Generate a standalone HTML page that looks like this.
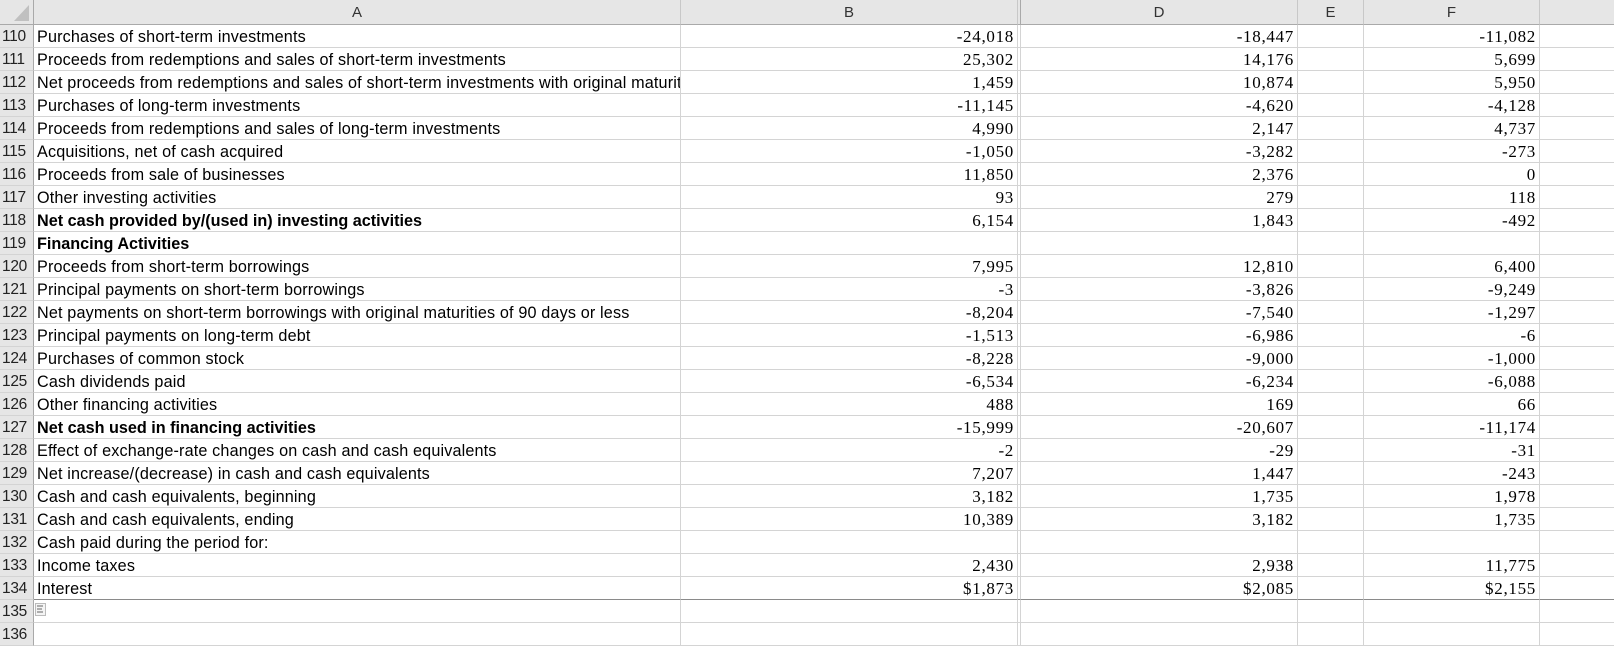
<!DOCTYPE html>
<html><head><meta charset="utf-8">
<style>
*{margin:0;padding:0;box-sizing:border-box}
body{width:1614px;height:636px;overflow:hidden;background:#fff;position:relative;font-family:"Liberation Sans",sans-serif}
.r{position:absolute;left:0;width:1614px;height:23px}
.r div{position:absolute;top:0;height:23px;border-right:1px solid #d4d4d4;border-bottom:1px solid #d4d4d4;line-height:24px;white-space:nowrap;overflow:hidden}
.h{left:0;width:34px;background:#e6e6e6;border-right:1px solid #a9a9a9 !important;color:#222;font-size:15.5px;padding-left:2px;letter-spacing:-0.3px}
.a{left:34px;width:647px;font-size:16.2px;color:#000;padding-left:3px;letter-spacing:0.15px}
.b{left:681px;width:337px}
.c{left:1018px;width:3px}
.d{left:1021px;width:277px}
.e{left:1298px;width:66px}
.f{left:1364px;width:176px}
.g{left:1540px;width:74px;border-right:none !important}
.n{font-family:"Liberation Serif",serif;font-size:17px;letter-spacing:0.7px;text-align:right;padding-right:3px;color:#000}
.bo{font-weight:bold;letter-spacing:0}
.hd{position:absolute;top:0;height:25px;background:#e6e6e6;border-right:1px solid #c8c8c8;border-bottom:1px solid #a9a9a9;text-align:center;line-height:26px;font-size:15px;color:#333}
</style></head><body>
<div class="hd" style="left:0;width:34px;border-right:1px solid #a9a9a9"><svg width="34" height="25" style="position:absolute;left:0;top:0"><polygon points="29,5 29,21 14,21" fill="#c0c0c0"/></svg></div>
<div class="hd" style="left:34px;width:647px">A</div>
<div class="hd" style="left:681px;width:337px">B</div>
<div class="hd" style="left:1018px;width:3px;border-right:1px solid #a9a9a9"></div>
<div class="hd" style="left:1021px;width:277px">D</div>
<div class="hd" style="left:1298px;width:66px">E</div>
<div class="hd" style="left:1364px;width:176px">F</div>
<div class="hd" style="left:1540px;width:74px;border-right:none"></div>

<div class="r" style="top:25px"><div class="h">110</div><div class="a">Purchases of short-term investments</div><div class="b n">-24,018</div><div class="c"></div><div class="d n">-18,447</div><div class="e"></div><div class="f n">-11,082</div><div class="g"></div></div>
<div class="r" style="top:48px"><div class="h">111</div><div class="a">Proceeds from redemptions and sales of short-term investments</div><div class="b n">25,302</div><div class="c"></div><div class="d n">14,176</div><div class="e"></div><div class="f n">5,699</div><div class="g"></div></div>
<div class="r" style="top:71px"><div class="h">112</div><div class="a">Net proceeds from redemptions and sales of short-term investments with original maturities of 90 days or less</div><div class="b n">1,459</div><div class="c"></div><div class="d n">10,874</div><div class="e"></div><div class="f n">5,950</div><div class="g"></div></div>
<div class="r" style="top:94px"><div class="h">113</div><div class="a">Purchases of long-term investments</div><div class="b n">-11,145</div><div class="c"></div><div class="d n">-4,620</div><div class="e"></div><div class="f n">-4,128</div><div class="g"></div></div>
<div class="r" style="top:117px"><div class="h">114</div><div class="a">Proceeds from redemptions and sales of long-term investments</div><div class="b n">4,990</div><div class="c"></div><div class="d n">2,147</div><div class="e"></div><div class="f n">4,737</div><div class="g"></div></div>
<div class="r" style="top:140px"><div class="h">115</div><div class="a">Acquisitions, net of cash acquired</div><div class="b n">-1,050</div><div class="c"></div><div class="d n">-3,282</div><div class="e"></div><div class="f n">-273</div><div class="g"></div></div>
<div class="r" style="top:163px"><div class="h">116</div><div class="a">Proceeds from sale of businesses</div><div class="b n">11,850</div><div class="c"></div><div class="d n">2,376</div><div class="e"></div><div class="f n">0</div><div class="g"></div></div>
<div class="r" style="top:186px"><div class="h">117</div><div class="a">Other investing activities</div><div class="b n">93</div><div class="c"></div><div class="d n">279</div><div class="e"></div><div class="f n">118</div><div class="g"></div></div>
<div class="r" style="top:209px"><div class="h">118</div><div class="a bo">Net cash provided by/(used in) investing activities</div><div class="b n">6,154</div><div class="c"></div><div class="d n">1,843</div><div class="e"></div><div class="f n">-492</div><div class="g"></div></div>
<div class="r" style="top:232px"><div class="h">119</div><div class="a bo">Financing Activities</div><div class="b n"></div><div class="c"></div><div class="d n"></div><div class="e"></div><div class="f n"></div><div class="g"></div></div>
<div class="r" style="top:255px"><div class="h">120</div><div class="a">Proceeds from short-term borrowings</div><div class="b n">7,995</div><div class="c"></div><div class="d n">12,810</div><div class="e"></div><div class="f n">6,400</div><div class="g"></div></div>
<div class="r" style="top:278px"><div class="h">121</div><div class="a">Principal payments on short-term borrowings</div><div class="b n">-3</div><div class="c"></div><div class="d n">-3,826</div><div class="e"></div><div class="f n">-9,249</div><div class="g"></div></div>
<div class="r" style="top:301px"><div class="h">122</div><div class="a">Net payments on short-term borrowings with original maturities of 90 days or less</div><div class="b n">-8,204</div><div class="c"></div><div class="d n">-7,540</div><div class="e"></div><div class="f n">-1,297</div><div class="g"></div></div>
<div class="r" style="top:324px"><div class="h">123</div><div class="a">Principal payments on long-term debt</div><div class="b n">-1,513</div><div class="c"></div><div class="d n">-6,986</div><div class="e"></div><div class="f n">-6</div><div class="g"></div></div>
<div class="r" style="top:347px"><div class="h">124</div><div class="a">Purchases of common stock</div><div class="b n">-8,228</div><div class="c"></div><div class="d n">-9,000</div><div class="e"></div><div class="f n">-1,000</div><div class="g"></div></div>
<div class="r" style="top:370px"><div class="h">125</div><div class="a">Cash dividends paid</div><div class="b n">-6,534</div><div class="c"></div><div class="d n">-6,234</div><div class="e"></div><div class="f n">-6,088</div><div class="g"></div></div>
<div class="r" style="top:393px"><div class="h">126</div><div class="a">Other financing activities</div><div class="b n">488</div><div class="c"></div><div class="d n">169</div><div class="e"></div><div class="f n">66</div><div class="g"></div></div>
<div class="r" style="top:416px"><div class="h">127</div><div class="a bo">Net cash used in financing activities</div><div class="b n">-15,999</div><div class="c"></div><div class="d n">-20,607</div><div class="e"></div><div class="f n">-11,174</div><div class="g"></div></div>
<div class="r" style="top:439px"><div class="h">128</div><div class="a">Effect of exchange-rate changes on cash and cash equivalents</div><div class="b n">-2</div><div class="c"></div><div class="d n">-29</div><div class="e"></div><div class="f n">-31</div><div class="g"></div></div>
<div class="r" style="top:462px"><div class="h">129</div><div class="a">Net increase/(decrease) in cash and cash equivalents</div><div class="b n">7,207</div><div class="c"></div><div class="d n">1,447</div><div class="e"></div><div class="f n">-243</div><div class="g"></div></div>
<div class="r" style="top:485px"><div class="h">130</div><div class="a">Cash and cash equivalents, beginning</div><div class="b n">3,182</div><div class="c"></div><div class="d n">1,735</div><div class="e"></div><div class="f n">1,978</div><div class="g"></div></div>
<div class="r" style="top:508px"><div class="h">131</div><div class="a">Cash and cash equivalents, ending</div><div class="b n">10,389</div><div class="c"></div><div class="d n">3,182</div><div class="e"></div><div class="f n">1,735</div><div class="g"></div></div>
<div class="r" style="top:531px"><div class="h">132</div><div class="a">Cash paid during the period for:</div><div class="b n"></div><div class="c"></div><div class="d n"></div><div class="e"></div><div class="f n"></div><div class="g"></div></div>
<div class="r" style="top:554px"><div class="h">133</div><div class="a">Income taxes</div><div class="b n">2,430</div><div class="c"></div><div class="d n">2,938</div><div class="e"></div><div class="f n">11,775</div><div class="g"></div></div>
<div class="r" style="top:577px"><div class="h">134</div><div class="a" style="border-bottom-color:#8a8a8a">Interest</div><div class="b n" style="border-bottom-color:#8a8a8a">$1,873</div><div class="c" style="border-bottom-color:#8a8a8a"></div><div class="d n" style="border-bottom-color:#8a8a8a">$2,085</div><div class="e" style="border-bottom-color:#8a8a8a"></div><div class="f n" style="border-bottom-color:#8a8a8a">$2,155</div><div class="g" style="border-bottom-color:#8a8a8a"></div></div>
<div class="r" style="top:600px"><div class="h">135</div><div class="a"></div><div class="b"></div><div class="c"></div><div class="d"></div><div class="e"></div><div class="f"></div><div class="g"></div></div>
<div class="r" style="top:623px"><div class="h">136</div><div class="a"></div><div class="b"></div><div class="c"></div><div class="d"></div><div class="e"></div><div class="f"></div><div class="g"></div></div>
<svg width="12" height="14" style="position:absolute;left:35px;top:603px"><rect x="0.5" y="0.5" width="10" height="12" fill="#f4f4f4" stroke="#bbb"/><g stroke="#666"><line x1="2" y1="3" x2="8" y2="3"/><line x1="2" y1="6" x2="7" y2="6"/><line x1="2" y1="9" x2="8" y2="9"/></g></svg>
</body></html>
